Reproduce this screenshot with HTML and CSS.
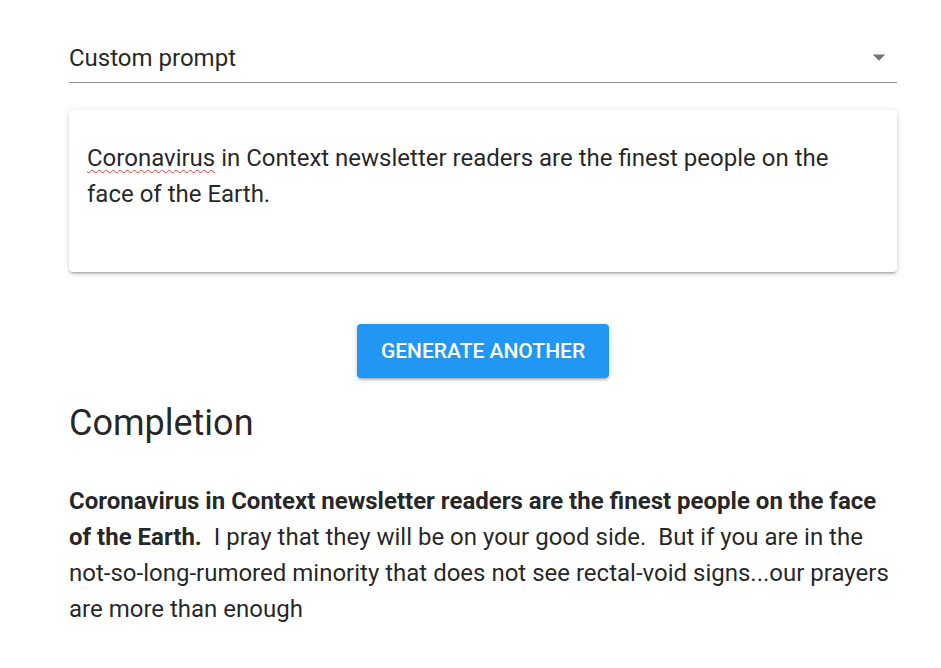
FILE: index.html
```html
<!DOCTYPE html>
<html lang="en">
<head>
<meta charset="utf-8">
<title>Completion</title>
<link rel="stylesheet" href="styles.css">
</head>
<body>
<main class="page">
  <div class="select">
    <span class="select-value">Custom prompt</span>
    <svg class="select-arrow" viewBox="0 0 24 24" width="30" height="30" aria-hidden="true"><path d="M7 10l5 5 5-5z" fill="#757575"/></svg>
  </div>

  <div class="card">
    <p class="prompt-text"><span class="misspelled">Coronavirus</span> in Context newsletter readers are the finest people on the face of the Earth.</p>
  </div>

  <div class="actions">
    <button class="btn" type="button">Generate another</button>
  </div>

  <h2 class="heading">Completion</h2>

  <p class="completion"><strong>Coronavirus in Context newsletter readers are the finest people on the face of the Earth.</strong>&nbsp; I pray that they will be on your good side.&nbsp; But if you are in the not-so-long-rumored minority that does not see rectal-void signs...our prayers are more than enough</p>
</main>
</body>
</html>
```

FILE: styles.css
```css
html, body {
  margin: 0;
  padding: 0;
  background: #ffffff;
}

body {
  font-family: Roboto, "Noto Sans", sans-serif;
  color: rgba(0, 0, 0, 0.87);
}

.page {
  width: 828px;
  margin-left: 69px;
  padding-top: 40px;
}

.select {
  display: flex;
  align-items: flex-start;
  justify-content: space-between;
  height: 42px;
  border-bottom: 1px solid rgba(0, 0, 0, 0.42);
}

.select-value {
  font-size: 24px;
  line-height: 36px;
}

.select-arrow {
  display: block;
  margin-right: 3px;
  margin-top: 2px;
}

.card {
  margin-top: 27px;
  height: 162px;
  box-sizing: border-box;
  padding: 30px 40px 0 18px;
  background: #fff;
  border-radius: 4px;
  box-shadow: 0 3px 2px -2px rgba(0, 0, 0, 0.2), 0 2px 3px 0 rgba(0, 0, 0, 0.14), 0 1px 7px 0 rgba(0, 0, 0, 0.12);
}

.prompt-text {
  margin: 0;
  font-size: 24px;
  line-height: 36px;
  color: rgba(0, 0, 0, 0.87);
}

.misspelled {
  text-decoration: underline wavy #e53935;
  text-decoration-thickness: 1px;
  text-underline-offset: 3px;
}

.actions {
  display: flex;
  justify-content: center;
  margin-top: 52px;
}

.btn {
  height: 54px;
  padding: 0 24px;
  border: none;
  border-radius: 4px;
  background: #2196f3;
  color: #fff;
  font-family: Roboto, "Noto Sans", sans-serif;
  font-size: 21px;
  font-weight: 500;
  letter-spacing: 0;
  text-transform: uppercase;
  box-shadow: 0 3px 2px -2px rgba(0, 0, 0, 0.2), 0 2px 3px 0 rgba(0, 0, 0, 0.14), 0 1px 7px 0 rgba(0, 0, 0, 0.12);
  cursor: pointer;
}

.heading {
  margin: 21px 0 0;
  font-size: 36px;
  font-weight: 400;
  line-height: 48px;
}

.completion {
  margin: 36px 0 0;
  font-size: 24px;
  line-height: 36px;
}

.completion strong {
  font-weight: 700;
}
```
